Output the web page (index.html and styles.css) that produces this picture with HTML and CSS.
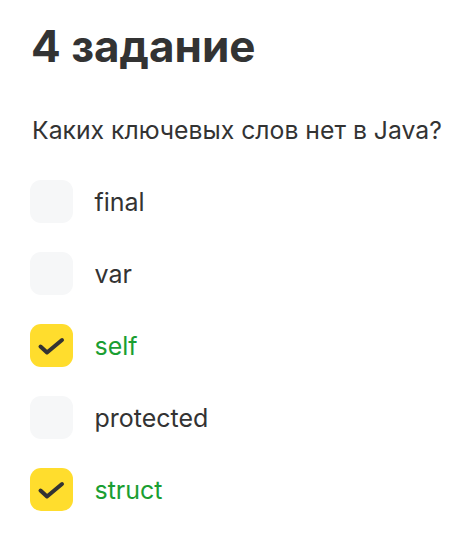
FILE: index.html
```html
<!DOCTYPE html>
<html lang="ru">
<head>
<meta charset="utf-8">
<link rel="stylesheet" href="styles.css">
</head>
<body>
<main class="task">
  <h1 class="title">4 задание</h1>
  <p class="question">Каких ключевых слов нет в Java?</p>
  <ul class="options">
    <li class="option"><span class="box"></span><span class="label">final</span></li>
    <li class="option"><span class="box"></span><span class="label">var</span></li>
    <li class="option checked"><span class="box"><svg viewBox="0 0 43 43" width="43" height="43"><path d="M10.5 22.5 L17 28.5 L32 16" fill="none" stroke="#333" stroke-width="4" stroke-linecap="round" stroke-linejoin="round"/></svg></span><span class="label">self</span></li>
    <li class="option"><span class="box"></span><span class="label">protected</span></li>
    <li class="option checked"><span class="box"><svg viewBox="0 0 43 43" width="43" height="43"><path d="M10.5 22.5 L17 28.5 L32 16" fill="none" stroke="#333" stroke-width="4" stroke-linecap="round" stroke-linejoin="round"/></svg></span><span class="label">struct</span></li>
  </ul>
</main>
</body>
</html>
```
FILE: styles.css
```css
* { box-sizing: border-box; }
html, body { margin: 0; padding: 0; background: #fff; }
body { font-family: Inter, Roboto, "Liberation Sans", sans-serif; color: #333333; }
.task { padding: 22px 10px 24px 30px; }
.title { margin: 0 0 0 1px; font-size: 44px; font-weight: 700; line-height: 48px; }
.question { margin: 44px 0 0 2px; font-size: 24.75px; line-height: 32px; font-weight: 400; white-space: nowrap; }
.options { list-style: none; margin: 34px 0 0; padding: 0; display: flex; flex-direction: column; gap: 29px; }
.option { display: flex; align-items: center; gap: 21.5px; }
.box { width: 43px; height: 43px; border-radius: 11px; background: #f6f7f8; display: flex; flex: none; }
.checked .box { background: #ffdd2d; }
.label { font-size: 25px; line-height: 32px; }
.checked .label { color: #1a9e32; }
```
